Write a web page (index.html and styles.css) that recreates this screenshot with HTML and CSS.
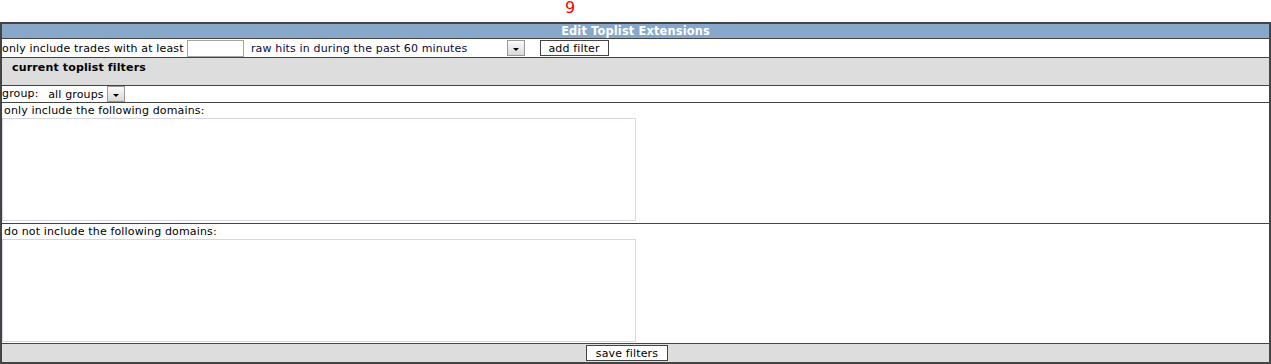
FILE: index.html
```html
<!DOCTYPE html>
<html lang="en">
<head>
  <meta charset="UTF-8" />
  <title>Edit Toplist Extensions</title>
  <link rel="stylesheet" href="styles.css">
</head>
<body>
  <div class="page-num">9</div>

  <table class="ext">
    <tr>
      <th class="title">Edit Toplist Extensions</th>
    </tr>
    <tr>
      <td class="filter-row">
        only include trades with at least
        <input type="text" class="hits">
        <span class="select wide">
          <span class="select-text">raw hits in during the past 60 minutes</span>
          <span class="arrow"></span>
        </span>
        <button class="btn add">add filter</button>
      </td>
    </tr>
    <tr>
      <td class="section">current toplist filters</td>
    </tr>
    <tr>
      <td class="group-row">
        group:
        <span class="select">
          <span class="select-text">all groups</span>
          <span class="arrow"></span>
        </span>
      </td>
    </tr>
    <tr>
      <td class="domains first">
        <div class="label">only include the following domains:</div>
        <textarea></textarea>
      </td>
    </tr>
    <tr>
      <td class="domains">
        <div class="label">do not include the following domains:</div>
        <textarea></textarea>
      </td>
    </tr>
    <tr>
      <td class="footer"><button class="btn save">save filters</button></td>
    </tr>
  </table>
</body>
</html>
```

FILE: styles.css
```css
body {
  margin: 0;
  font-family: Tahoma, "DejaVu Sans", sans-serif;
  font-size: 11px;
  letter-spacing: 0.15px;
  color: #000;
  background: #fff;
}

.page-num {
  height: 22px;
  line-height: 16px;
  text-align: center;
  padding-right: 131px;
  color: #ff0000;
  font-size: 16px;
  letter-spacing: 0;
}

.ext {
  width: 1271px;
  border-collapse: collapse;
  border: 2px solid #444;
}

.ext td,
.ext th {
  border: 1px solid #444;
  padding: 0;
  text-align: left;
}

.title {
  background: #87a8cb;
  color: #fff;
  font-weight: bold;
  font-size: 11.4px;
  text-align: center !important;
  height: 14px;
  line-height: 14px;
}

.filter-row {
  height: 18px;
  white-space: nowrap;
}

.hits {
  width: 57px;
  height: 17px;
  box-sizing: border-box;
  border: 1px solid #a5a5a5;
  padding: 0;
  margin: 0 3px 0 0;
  vertical-align: middle;
  font: inherit;
}

.select {
  display: inline-flex;
  align-items: center;
  vertical-align: middle;
  margin-left: 0;
}

.wide .select-text {
  color: #0a0a3a;
  width: 253px;
}

.arrow {
  display: inline-block;
  width: 16px;
  height: 14px;
  margin-left: 3px;
  border: 1px solid #999;
  background: linear-gradient(#fafafa, #d8d8d8);
  position: relative;
}

.arrow::after {
  content: "";
  position: absolute;
  left: 5px;
  top: 7px;
  border-left: 3px solid transparent;
  border-right: 3px solid transparent;
  border-top: 3px solid #000;
}

.btn {
  font: inherit;
  letter-spacing: inherit;
  background: #fff;
  border: 1px solid #444;
  padding: 0;
  height: 16px;
  vertical-align: middle;
}

.add {
  width: 69px;
  margin-left: 11px;
}

.section {
  background: #ddd;
  font-weight: bold;
  height: 28px;
  vertical-align: top;
  padding: 3px 0 0 10px !important;
  box-sizing: border-box;
}

.group-row {
  height: 15px;
  line-height: 15px;
}

.group-row .select {
  margin-left: 6px;
}

.group-row .arrow {
  margin-left: 3px;
}

.domains {
  height: 119px;
  vertical-align: top;
}

.domains.first {
  height: 120px;
}

.label {
  padding: 1px 0 0 2px;
  height: 13px;
  line-height: 13px;
}

.domains textarea {
  display: block;
  box-sizing: border-box;
  width: 634px;
  height: 103px;
  margin: 1px 0 0 0;
  border: 1px solid #d6d6e0;
  padding: 0;
  resize: none;
}

.footer {
  background: #ddd;
  text-align: center !important;
  height: 18px;
}

.save {
  width: 82px;
  margin-right: 17px;
}
```
